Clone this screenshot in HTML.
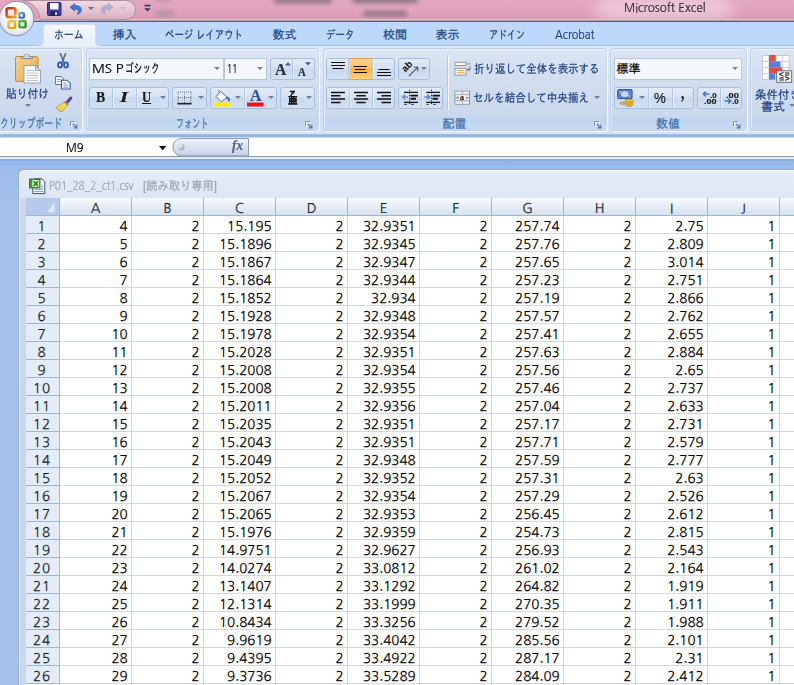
<!DOCTYPE html>
<html lang="ja"><head><meta charset="utf-8"><title>Microsoft Excel</title>
<style>
*{box-sizing:border-box;margin:0;padding:0}
html,body{width:794px;height:685px;overflow:hidden;background:#bfdbff}
body{position:relative;font-family:"Liberation Sans","IPAGothic","Noto Sans CJK JP",sans-serif;font-size:12px;color:#15428b}
.abs{position:absolute}
svg{display:block;position:absolute;overflow:visible}
/* title bar */
#title{position:absolute;left:0;top:0;width:794px;height:22px;background:linear-gradient(#e3a6bf 0,#e2a4bc 10px,#d89ab2 19px);overflow:hidden}
#title .sm{position:absolute;background:#6a5f70;opacity:.8;filter:blur(2.5px);border-radius:3px}
#title .glow{position:absolute;left:596px;top:-4px;width:136px;height:24px;border-radius:12px;background:#f0cfde;filter:blur(7px);opacity:.8}
#title .line{position:absolute;left:0;top:19px;width:794px;height:3px;background:linear-gradient(#e3bccd 0,#e8c6d4 1.2px,#565a80 2px,#565a80 3px)}
#apptitle{position:absolute;left:623px;top:0px;font-size:12px;color:#3c3c46;letter-spacing:0.35px;white-space:nowrap;line-height:15px}
/* tabs */
#tabs{position:absolute;left:0;top:22px;width:794px;height:23px;background:#bed8fb;z-index:2}
.tab{position:absolute;top:6px;font-size:12px;line-height:14px;white-space:nowrap;color:#15428b}

/* ribbon */
#ribbon{position:absolute;left:0;top:45px;width:794px;height:90px;background:linear-gradient(#e2ebf7 0,#d9e4f3 30px,#d1dff2 70px,#d6e4f7 100%);border-top:1px solid #a6c3ec}
.grp{position:absolute;top:2px;height:83px;border:1px solid #bccfe8;border-right-color:#c9d8ec;border-radius:4px;background:linear-gradient(#dce6f4 0,#d4e0f0 20px,#cad8ec 67px,#c1d5ef 69px,#c5d9f2 100%);box-shadow:1px 1px 0 rgba(255,255,255,.8),inset 1px 1px 0 rgba(255,255,255,.45)}
.glabel{position:absolute;left:0;right:0;bottom:1px;height:14px;line-height:14px;text-align:center;font-size:12px;color:#3e6aaa;white-space:nowrap}
.btn{position:absolute;border:1px solid #a7bfde;border-radius:3px;background:linear-gradient(#e1ebf7 0,#d6e2f3 45%,#c9d9ee 50%,#d3e1f3 100%)}
.box{position:absolute;border:1px solid #b3c9e6;background:#f4f8fd;color:#000}
.t{position:absolute;white-space:nowrap;line-height:14px;transform-origin:0 0}
#labels,#icons{position:absolute;left:0;top:0;width:794px;height:685px;overflow:hidden;z-index:3}
#labels{z-index:4}
#labels .t{-webkit-text-stroke:0.2px currentColor}
.dd{position:absolute;width:0;height:0;border-left:3px solid transparent;border-right:3px solid transparent;border-top:3px solid #6b7fa3}
.dv{position:absolute;top:0;bottom:0;width:1px;background:#b5c9e6;box-shadow:1px 0 0 rgba(255,255,255,.5)}
.sel{position:absolute;top:-1px;bottom:-1px;background:linear-gradient(#ffd291 0,#ffbe5d 45%,#ffac35 50%,#ffd487 100%);border:1px solid #e8a64a}
.vsep{position:absolute;width:1px;background:#b9c9e0;box-shadow:1px 0 0 rgba(255,255,255,.8)}
/* formula bar */
#fbar{position:absolute;left:0;top:134px;width:794px;height:26px;background:linear-gradient(#b9cfee 0,#93b4e4 .8px,#93b4e4 3.3px,#fff 3.7px,#fff 22px,#8b98a6 22px,#8b98a6 23px,#e3eefb 23px,#dfebfa 25.5px,#8aabdc 25.5px)}
/* workspace */
#work{position:absolute;left:0;top:160px;width:794px;height:525px;background:linear-gradient(#8aabdc 0,#93b5e8 1.5px,#9ebdec 10px,#a4c1ed 40px,#a5c2ed 100%)}
#win{position:absolute;left:18px;top:9px;width:900px;height:600px;border:1px solid #96add0;border-radius:6px 0 0 0;background:linear-gradient(#e6edf8 0,#dde6f3 27px,#cdd8e9 29px,#cbd6e8 100%);box-shadow:inset 1px 1px 0 rgba(255,255,255,.6)}
#wtitle{position:absolute;left:30px;top:8px;font-size:12px;line-height:14px;color:#8d96a3;white-space:nowrap}
#grid{font-family:'NanumGothic','Liberation Sans',sans-serif;position:absolute;left:7px;top:28px;width:880px;height:500px;background:#fff;font-size:13.4px;color:#000;text-rendering:geometricPrecision;-webkit-text-stroke:0.18px #000}
.corner{position:absolute;left:0;top:0;width:34px;height:18px;background:#b3caea;border-right:1px solid #9eb6ce;border-bottom:1px solid #9eb6ce}
.ch{position:absolute;top:0;width:72px;height:18px;line-height:22px;text-align:center;background:linear-gradient(#f7fafd 0,#e6edf6 50%,#d7e2f0 100%);border-right:1px solid #9eb6ce;border-bottom:1px solid #9eb6ce;color:#27303c}
.rh{position:absolute;left:0;width:34px;height:18px;line-height:21px;text-align:center;padding-right:1px;letter-spacing:.8px;background:#e4ecf7;border-right:1px solid #9eb6ce;border-bottom:1px solid #9eb6ce;color:#27303c}
.row{position:absolute;left:34px;height:18px;white-space:nowrap;font-size:0}
.row span{display:inline-block;width:72px;height:18px;line-height:21px;font-size:13.4px;letter-spacing:0;text-align:right;padding-right:3.3px;border-right:1px solid #d0d7e5;border-bottom:1px solid #d0d7e5;vertical-align:top}
.row i{font-style:normal;position:relative;top:-0.6px;-webkit-text-stroke:0.45px #000}
</style></head><body>

<div id="title">
<div class="sm" style="left:274px;top:-3px;width:58px;height:6px"></div>
<div class="sm" style="left:352px;top:-3px;width:66px;height:6px"></div>
<div class="sm" style="left:363px;top:11px;width:44px;height:5px;opacity:.75"></div>
<div class="sm" style="left:155px;top:11px;width:19px;height:5px;opacity:.55;background:#7d8094"></div>
<div class="sm" style="left:155px;top:-3px;width:16px;height:4px;opacity:.4"></div>
<div class="glow"></div>
<div class="line"></div>
</div>

<div id="tabs">
<svg style="left:38px;top:1px" width="64" height="24" viewBox="38 23 64 24">
<defs><linearGradient id="tg" x1="0" y1="0" x2="0" y2="1"><stop offset="0" stop-color="#f7faff"/><stop offset=".5" stop-color="#edf3fc"/><stop offset="1" stop-color="#e4edf9"/></linearGradient></defs>
<path d="M39 47 V46 Q43.3 45.6 43.5 41.5 V27.5 Q43.5 24.2 47 24.2 H92 Q95.5 24.2 95.5 27.5 V41.5 Q95.7 45.6 100 46 V47Z" fill="url(#tg)" stroke="#cfdef3" stroke-width="1"/>
<rect x="39" y="46" width="62" height="1.2" fill="#e4edf9"/>
</svg>
</div>

<div id="ribbon">
<div class="grp" style="left:-3px;width:85px"></div>
<div class="grp" style="left:86px;width:233px"></div>
<div class="grp" style="left:323px;width:284px"></div>
<div class="grp" style="left:610px;width:137px"></div>
<div class="grp" style="left:750px;width:100px"></div>
</div>

<div id="fbar">
</div>

<div id="work">
<div id="win">
<div id="grid">
<div class="corner"><svg width="34" height="17"><polygon points="28.7,4 28.7,14.3 21.3,14.3" fill="#dde8f6"/></svg></div>
<div class="ch" style="left:34px">A</div>
<div class="ch" style="left:106px">B</div>
<div class="ch" style="left:178px">C</div>
<div class="ch" style="left:250px">D</div>
<div class="ch" style="left:322px">E</div>
<div class="ch" style="left:394px">F</div>
<div class="ch" style="left:466px">G</div>
<div class="ch" style="left:538px">H</div>
<div class="ch" style="left:610px">I</div>
<div class="ch" style="left:682px">J</div>
<div class="ch" style="left:754px">K</div>
<div class="rh" style="top:18px">1</div>
<div class="row" style="top:18px"><span>4</span><span>2</span><span>15<i>.</i>195</span><span>2</span><span>32<i>.</i>9351</span><span>2</span><span>257<i>.</i>74</span><span>2</span><span>2<i>.</i>75</span><span>1</span><span></span></div>
<div class="rh" style="top:36px">2</div>
<div class="row" style="top:36px"><span>5</span><span>2</span><span>15<i>.</i>1896</span><span>2</span><span>32<i>.</i>9345</span><span>2</span><span>257<i>.</i>76</span><span>2</span><span>2<i>.</i>809</span><span>1</span><span></span></div>
<div class="rh" style="top:54px">3</div>
<div class="row" style="top:54px"><span>6</span><span>2</span><span>15<i>.</i>1867</span><span>2</span><span>32<i>.</i>9347</span><span>2</span><span>257<i>.</i>65</span><span>2</span><span>3<i>.</i>014</span><span>1</span><span></span></div>
<div class="rh" style="top:72px">4</div>
<div class="row" style="top:72px"><span>7</span><span>2</span><span>15<i>.</i>1864</span><span>2</span><span>32<i>.</i>9344</span><span>2</span><span>257<i>.</i>23</span><span>2</span><span>2<i>.</i>751</span><span>1</span><span></span></div>
<div class="rh" style="top:90px">5</div>
<div class="row" style="top:90px"><span>8</span><span>2</span><span>15<i>.</i>1852</span><span>2</span><span>32<i>.</i>934</span><span>2</span><span>257<i>.</i>19</span><span>2</span><span>2<i>.</i>866</span><span>1</span><span></span></div>
<div class="rh" style="top:108px">6</div>
<div class="row" style="top:108px"><span>9</span><span>2</span><span>15<i>.</i>1928</span><span>2</span><span>32<i>.</i>9348</span><span>2</span><span>257<i>.</i>57</span><span>2</span><span>2<i>.</i>762</span><span>1</span><span></span></div>
<div class="rh" style="top:126px">7</div>
<div class="row" style="top:126px"><span>10</span><span>2</span><span>15<i>.</i>1978</span><span>2</span><span>32<i>.</i>9354</span><span>2</span><span>257<i>.</i>41</span><span>2</span><span>2<i>.</i>655</span><span>1</span><span></span></div>
<div class="rh" style="top:144px">8</div>
<div class="row" style="top:144px"><span>11</span><span>2</span><span>15<i>.</i>2028</span><span>2</span><span>32<i>.</i>9351</span><span>2</span><span>257<i>.</i>63</span><span>2</span><span>2<i>.</i>884</span><span>1</span><span></span></div>
<div class="rh" style="top:162px">9</div>
<div class="row" style="top:162px"><span>12</span><span>2</span><span>15<i>.</i>2008</span><span>2</span><span>32<i>.</i>9354</span><span>2</span><span>257<i>.</i>56</span><span>2</span><span>2<i>.</i>65</span><span>1</span><span></span></div>
<div class="rh" style="top:180px">10</div>
<div class="row" style="top:180px"><span>13</span><span>2</span><span>15<i>.</i>2008</span><span>2</span><span>32<i>.</i>9355</span><span>2</span><span>257<i>.</i>46</span><span>2</span><span>2<i>.</i>737</span><span>1</span><span></span></div>
<div class="rh" style="top:198px">11</div>
<div class="row" style="top:198px"><span>14</span><span>2</span><span>15<i>.</i>2011</span><span>2</span><span>32<i>.</i>9356</span><span>2</span><span>257<i>.</i>04</span><span>2</span><span>2<i>.</i>633</span><span>1</span><span></span></div>
<div class="rh" style="top:216px">12</div>
<div class="row" style="top:216px"><span>15</span><span>2</span><span>15<i>.</i>2035</span><span>2</span><span>32<i>.</i>9351</span><span>2</span><span>257<i>.</i>17</span><span>2</span><span>2<i>.</i>731</span><span>1</span><span></span></div>
<div class="rh" style="top:234px">13</div>
<div class="row" style="top:234px"><span>16</span><span>2</span><span>15<i>.</i>2043</span><span>2</span><span>32<i>.</i>9351</span><span>2</span><span>257<i>.</i>71</span><span>2</span><span>2<i>.</i>579</span><span>1</span><span></span></div>
<div class="rh" style="top:252px">14</div>
<div class="row" style="top:252px"><span>17</span><span>2</span><span>15<i>.</i>2049</span><span>2</span><span>32<i>.</i>9348</span><span>2</span><span>257<i>.</i>59</span><span>2</span><span>2<i>.</i>777</span><span>1</span><span></span></div>
<div class="rh" style="top:270px">15</div>
<div class="row" style="top:270px"><span>18</span><span>2</span><span>15<i>.</i>2052</span><span>2</span><span>32<i>.</i>9352</span><span>2</span><span>257<i>.</i>31</span><span>2</span><span>2<i>.</i>63</span><span>1</span><span></span></div>
<div class="rh" style="top:288px">16</div>
<div class="row" style="top:288px"><span>19</span><span>2</span><span>15<i>.</i>2067</span><span>2</span><span>32<i>.</i>9354</span><span>2</span><span>257<i>.</i>29</span><span>2</span><span>2<i>.</i>526</span><span>1</span><span></span></div>
<div class="rh" style="top:306px">17</div>
<div class="row" style="top:306px"><span>20</span><span>2</span><span>15<i>.</i>2065</span><span>2</span><span>32<i>.</i>9353</span><span>2</span><span>256<i>.</i>45</span><span>2</span><span>2<i>.</i>612</span><span>1</span><span></span></div>
<div class="rh" style="top:324px">18</div>
<div class="row" style="top:324px"><span>21</span><span>2</span><span>15<i>.</i>1976</span><span>2</span><span>32<i>.</i>9359</span><span>2</span><span>254<i>.</i>73</span><span>2</span><span>2<i>.</i>815</span><span>1</span><span></span></div>
<div class="rh" style="top:342px">19</div>
<div class="row" style="top:342px"><span>22</span><span>2</span><span>14<i>.</i>9751</span><span>2</span><span>32<i>.</i>9627</span><span>2</span><span>256<i>.</i>93</span><span>2</span><span>2<i>.</i>543</span><span>1</span><span></span></div>
<div class="rh" style="top:360px">20</div>
<div class="row" style="top:360px"><span>23</span><span>2</span><span>14<i>.</i>0274</span><span>2</span><span>33<i>.</i>0812</span><span>2</span><span>261<i>.</i>02</span><span>2</span><span>2<i>.</i>164</span><span>1</span><span></span></div>
<div class="rh" style="top:378px">21</div>
<div class="row" style="top:378px"><span>24</span><span>2</span><span>13<i>.</i>1407</span><span>2</span><span>33<i>.</i>1292</span><span>2</span><span>264<i>.</i>82</span><span>2</span><span>1<i>.</i>919</span><span>1</span><span></span></div>
<div class="rh" style="top:396px">22</div>
<div class="row" style="top:396px"><span>25</span><span>2</span><span>12<i>.</i>1314</span><span>2</span><span>33<i>.</i>1999</span><span>2</span><span>270<i>.</i>35</span><span>2</span><span>1<i>.</i>911</span><span>1</span><span></span></div>
<div class="rh" style="top:414px">23</div>
<div class="row" style="top:414px"><span>26</span><span>2</span><span>10<i>.</i>8434</span><span>2</span><span>33<i>.</i>3256</span><span>2</span><span>279<i>.</i>52</span><span>2</span><span>1<i>.</i>988</span><span>1</span><span></span></div>
<div class="rh" style="top:432px">24</div>
<div class="row" style="top:432px"><span>27</span><span>2</span><span>9<i>.</i>9619</span><span>2</span><span>33<i>.</i>4042</span><span>2</span><span>285<i>.</i>56</span><span>2</span><span>2<i>.</i>101</span><span>1</span><span></span></div>
<div class="rh" style="top:450px">25</div>
<div class="row" style="top:450px"><span>28</span><span>2</span><span>9<i>.</i>4395</span><span>2</span><span>33<i>.</i>4922</span><span>2</span><span>287<i>.</i>17</span><span>2</span><span>2<i>.</i>31</span><span>1</span><span></span></div>
<div class="rh" style="top:468px">26</div>
<div class="row" style="top:468px"><span>29</span><span>2</span><span>9<i>.</i>3736</span><span>2</span><span>33<i>.</i>5289</span><span>2</span><span>284<i>.</i>09</span><span>2</span><span>2<i>.</i>412</span><span>1</span><span></span></div>
</div>
</div>
</div>

<div id="icons">
<!-- font group controls -->
<div class="box" style="left:89px;top:58px;width:135px;height:22px"></div>
<div class="box" style="left:224px;top:58px;width:43px;height:22px"></div>
<div class="dd" style="left:214px;top:67px"></div>
<div class="dd" style="left:257px;top:67px"></div>
<div class="btn" style="left:270px;top:58px;width:45px;height:22px"><i class="dv" style="left:21px"></i></div>
<div class="btn" style="left:89px;top:87px;width:80px;height:22px"><i class="dv" style="left:22px"></i><i class="dv" style="left:46px"></i></div>
<div class="dd" style="left:160px;top:96px"></div>
<div class="btn" style="left:172px;top:87px;width:35px;height:22px"></div>
<div class="dd" style="left:198px;top:96px"></div>
<div class="btn" style="left:210px;top:87px;width:67px;height:22px"><i class="dv" style="left:33px"></i></div>
<div class="dd" style="left:235px;top:96px"></div>
<div class="dd" style="left:268px;top:96px"></div>
<div class="btn" style="left:280px;top:87px;width:35px;height:22px"></div>
<div class="dd" style="left:306px;top:96px"></div>
<!-- alignment group -->
<div class="btn" style="left:326px;top:58px;width:69px;height:22px"><i class="sel" style="left:22px;width:24px"></i><i class="dv" style="left:21px"></i><i class="dv" style="left:45px"></i></div>
<div class="btn" style="left:398px;top:58px;width:32px;height:22px"></div>
<div class="dd" style="left:421px;top:67px"></div>
<div class="btn" style="left:326px;top:87px;width:69px;height:22px"><i class="dv" style="left:22px"></i><i class="dv" style="left:45px"></i></div>
<div class="btn" style="left:398px;top:87px;width:45px;height:22px"><i class="dv" style="left:22px"></i></div>
<div class="vsep" style="left:447px;top:55px;height:55px"></div>
<div class="dd" style="left:594px;top:96px"></div>
<!-- number group -->
<div class="box" style="left:614px;top:58px;width:128px;height:22px"></div>
<div class="dd" style="left:732px;top:67px"></div>
<div class="btn" style="left:614px;top:87px;width:80px;height:22px"><i class="dv" style="left:33px"></i><i class="dv" style="left:57px"></i></div>
<div class="dd" style="left:639px;top:96px"></div>
<div class="btn" style="left:697px;top:87px;width:45px;height:22px"><i class="dv" style="left:22px"></i></div>
<div class="dd" style="left:789px;top:104px"></div>
<div class="dd" style="left:25px;top:104px"></div>
<!-- QAT pill -->
<svg style="left:0;top:0" width="160" height="22" viewBox="0 0 160 22">
<defs><linearGradient id="qg" x1="0" y1="0" x2="0" y2="1"><stop offset="0" stop-color="#f0dfe6"/><stop offset=".5" stop-color="#e6cbd5"/><stop offset="1" stop-color="#d9b1c0"/></linearGradient></defs>
<path d="M22 0.5 H126 A9.5 9.5 0 0 1 126 19.5 H40 A20 20 0 0 0 22 0.5Z" fill="url(#qg)" stroke="#b08a9c" stroke-width="1" opacity=".9"/>
</svg>
<!-- office button -->
<svg style="left:-2px;top:0" width="38" height="38" viewBox="-2 0 38 38">
<defs>
<radialGradient id="ob" cx=".5" cy=".45" r=".55"><stop offset="0" stop-color="#ffffff"/><stop offset=".7" stop-color="#f3f4f8"/><stop offset=".9" stop-color="#dfe3ee"/><stop offset="1" stop-color="#c2c8da"/></radialGradient>
<linearGradient id="o1" x1="0" y1="0" x2="1" y2="1"><stop offset="0" stop-color="#c92a12"/><stop offset="1" stop-color="#f4a21c"/></linearGradient>
<linearGradient id="o2" x1="0" y1="0" x2="1" y2="1"><stop offset="0" stop-color="#5fa2dd"/><stop offset="1" stop-color="#2a62aa"/></linearGradient>
<linearGradient id="o3" x1="0" y1="0" x2="1" y2="1"><stop offset="0" stop-color="#f6c432"/><stop offset="1" stop-color="#ec9a18"/></linearGradient>
<linearGradient id="o4" x1="0" y1="0" x2="1" y2="1"><stop offset="0" stop-color="#6cc04a"/><stop offset="1" stop-color="#2f8a2c"/></linearGradient>
</defs>
<circle cx="16.5" cy="18.5" r="17.3" fill="url(#ob)" stroke="#8f90a8" stroke-width="1"/>
<path d="M0.5 14.5 A16.5 16.5 0 0 1 32.5 14.5 A30 30 0 0 0 0.5 14.5Z" fill="#fff" opacity=".6"/>
<rect x="6.6" y="8.3" width="8.8" height="8.8" rx="1.8" fill="#f6e9e0" stroke="url(#o1)" stroke-width="2.6"/>
<rect x="19.2" y="13.1" width="4.8" height="4.6" rx="1" fill="#e3eefa" stroke="url(#o2)" stroke-width="2"/>
<rect x="8.5" y="21.3" width="6.6" height="6.8" rx="1.5" fill="#fbf3d8" stroke="url(#o3)" stroke-width="2.4"/>
<rect x="19.3" y="21" width="6.3" height="6.4" rx="1.2" fill="#d8efcf" stroke="url(#o4)" stroke-width="2.4"/>
<rect x="14.5" y="15.5" width="5" height="7" fill="#f7f7fa"/>
<circle cx="15.5" cy="17.3" r="1.1" fill="#d8761a"/><circle cx="19.3" cy="17.3" r="1.1" fill="#2f6cb5"/>
<circle cx="15.5" cy="21.3" r="1.1" fill="#e8ae28"/><circle cx="19.3" cy="21.3" r="1.1" fill="#3c9a36"/>
</svg>
<!-- save -->
<svg style="left:47px;top:2px" width="15" height="14" viewBox="0 0 15 14">
<rect x=".5" y=".5" width="13.5" height="13" rx="1" fill="#3c3ca8" stroke="#28287a"/>
<rect x="3" y="1" width="8.5" height="6.5" fill="#f4f6ff"/>
<rect x="3.5" y="9.5" width="7.5" height="4" fill="#23235c"/>
<rect x="8" y="10.3" width="2" height="2.6" fill="#e8ecff"/>
</svg>
<!-- undo -->
<svg style="left:69px;top:3px" width="14" height="12" viewBox="0 0 14 12">
<path d="M1 4.2 L5.6 0.4 V2.6 C10.5 2.2 13.2 4.6 12.2 8 C11.6 9.8 10 11 8 11.4 C9.8 9.6 10.2 6.2 5.6 6 V8.2Z" fill="#3f78d6" stroke="#2b58b0" stroke-width=".6"/>
</svg>
<div class="dd" style="left:88px;top:7px;border-top-color:#5d6c98"></div>
<!-- redo -->
<svg style="left:100px;top:3px" width="14" height="12" viewBox="0 0 14 12">
<path d="M13 4.2 L8.4 0.4 V2.6 C3.5 2.2 0.8 4.6 1.8 8 C2.4 9.8 4 11 6 11.4 C4.2 9.6 3.8 6.2 8.4 6 V8.2Z" fill="#b3aed0" stroke="#a59fc4" stroke-width=".6"/>
</svg>
<div class="dd" style="left:120px;top:7px;border-top-color:#c9b9c8"></div>
<!-- customize -->
<svg style="left:144px;top:4px" width="8" height="9" viewBox="0 0 8 9">
<rect x=".5" y=".8" width="6" height="1.6" fill="#2d3668"/>
<path d="M.2 4.2 H6.8 L3.5 7.6Z" fill="#2d3668"/>
</svg>
<!-- paste -->
<svg style="left:14px;top:52px" width="28" height="32" viewBox="0 0 28 32">
<defs><linearGradient id="pg" x1="0" y1="0" x2="1" y2="1"><stop offset="0" stop-color="#f7d48e"/><stop offset="1" stop-color="#e3a84e"/></linearGradient></defs>
<rect x="1.5" y="4.5" width="22.5" height="25" rx="1.5" fill="url(#pg)" stroke="#c08d43"/>
<path d="M7 6.5 V4.5 H10 C10 1.5 15.5 1.5 15.5 4.5 H18.5 V6.5Z" fill="#cfd3da" stroke="#7d8594" stroke-width=".9"/>
<circle cx="12.7" cy="3.6" r="1" fill="#f6f7f9"/>
<path d="M10 13.5 H21.5 L26.5 18.5 V31 H10Z" fill="#fdfeff" stroke="#8d98ad" stroke-width=".9"/>
<path d="M21.5 13.5 V18.5 H26.5Z" fill="#d5dbe6" stroke="#8d98ad" stroke-width=".8"/>
<path d="M12.5 18.5 H20 M12.5 21 H24 M12.5 23.5 H24 M12.5 26 H24 M12.5 28.5 H24" stroke="#b9c3d3" stroke-width="1"/>
</svg>
<!-- scissors -->
<svg style="left:57px;top:53px" width="12" height="16" viewBox="0 0 12 16">
<path d="M3.4 0.6 L7 9.6 M8.6 0.6 L5 9.6" stroke="#5f6f8c" stroke-width="1.6" stroke-linecap="round"/>
<ellipse cx="3" cy="12" rx="2" ry="2.6" fill="none" stroke="#2f55b4" stroke-width="1.8"/>
<ellipse cx="9" cy="12" rx="2" ry="2.6" fill="none" stroke="#2f55b4" stroke-width="1.8"/>
</svg>
<!-- copy -->
<svg style="left:55px;top:75px" width="17" height="15" viewBox="0 0 17 15">
<path d="M.6 1.5 H6 L8.5 4 V9.5 H.6Z" fill="#fbfdff" stroke="#4f6fb5" stroke-width="1"/>
<path d="M2 4.5 H6.5 M2 6.5 H6.5" stroke="#7c93c8" stroke-width=".9"/>
<path d="M6.5 5.2 H12 L15.2 8.2 V14 H6.5Z" fill="#fbfdff" stroke="#3c5aa8" stroke-width="1.1"/>
<path d="M8.3 8.2 H11.5 M8.3 10.2 H13.5 M8.3 12.2 H13.5" stroke="#6f88c4" stroke-width=".9"/>
</svg>
<!-- format painter -->
<svg style="left:55px;top:97px" width="18" height="16" viewBox="0 0 18 16">
<path d="M15.8 1 L12 5.4" stroke="#5a3fa0" stroke-width="3" stroke-linecap="round"/>
<path d="M10.2 4.2 L13.4 7.2 L7.2 14.6 C4.8 14.6 2.6 12.6 1 10.6Z" fill="#f4d860" stroke="#b59a2c" stroke-width=".9"/>
<path d="M9.8 5.2 L12.6 7.8" stroke="#8a8aa8" stroke-width="1.6"/>
<path d="M3.2 11 L6 13.4 M5 9.6 L8 12.2" stroke="#d6b93e" stroke-width=".8"/>
</svg>
<!-- dialog launchers -->
<svg style="left:70px;top:121px" width="8" height="8" viewBox="0 0 8 8"><path d="M.5 5 V.5 H5" fill="none" stroke="#7e93b4"/><path d="M3 3 L6.7 6.7 M6.9 3.6 V6.9 H3.6" fill="none" stroke="#5d7498" stroke-width="1.1"/><path d="M1.5 6 V1.5 H6" fill="none" stroke="#fff" opacity=".8"/></svg>
<svg style="left:305px;top:121px" width="8" height="8" viewBox="0 0 8 8"><path d="M.5 5 V.5 H5" fill="none" stroke="#7e93b4"/><path d="M3 3 L6.7 6.7 M6.9 3.6 V6.9 H3.6" fill="none" stroke="#5d7498" stroke-width="1.1"/><path d="M1.5 6 V1.5 H6" fill="none" stroke="#fff" opacity=".8"/></svg>
<svg style="left:594px;top:121px" width="8" height="8" viewBox="0 0 8 8"><path d="M.5 5 V.5 H5" fill="none" stroke="#7e93b4"/><path d="M3 3 L6.7 6.7 M6.9 3.6 V6.9 H3.6" fill="none" stroke="#5d7498" stroke-width="1.1"/><path d="M1.5 6 V1.5 H6" fill="none" stroke="#fff" opacity=".8"/></svg>
<svg style="left:733px;top:121px" width="8" height="8" viewBox="0 0 8 8"><path d="M.5 5 V.5 H5" fill="none" stroke="#7e93b4"/><path d="M3 3 L6.7 6.7 M6.9 3.6 V6.9 H3.6" fill="none" stroke="#5d7498" stroke-width="1.1"/><path d="M1.5 6 V1.5 H6" fill="none" stroke="#fff" opacity=".8"/></svg>
<!-- grow/shrink triangles -->
<svg style="left:285px;top:62px" width="6" height="4" viewBox="0 0 6 4"><path d="M0 3.5 L3 .3 L6 3.5Z" fill="#3d5a9a"/></svg>
<svg style="left:305px;top:62px" width="6" height="4" viewBox="0 0 6 4"><path d="M0 .3 L3 3.5 L6 .3Z" fill="#3d5a9a"/></svg>
<!-- border icon -->
<svg style="left:177px;top:91px" width="15" height="14" viewBox="0 0 15 14">
<path d="M1 1 H14 M1 6.5 H14 M1 1 V12 M7.5 1 V12 M14 1 V12" stroke="#6d7a8c" stroke-width="1" stroke-dasharray="1 1"/>
<path d="M.5 12.7 H14.5" stroke="#1d1d2c" stroke-width="1.6"/>
</svg>
<!-- fill bucket -->
<svg style="left:213px;top:89px" width="19" height="18" viewBox="0 0 19 18">
<path d="M5.5 1 L7 6" stroke="#6a7890" stroke-width="1" fill="none"/>
<path d="M7.5 2.5 L14 8 L8.5 13 L3 7.5Z" fill="#f7f9fc" stroke="#5b6b86" stroke-width="1"/>
<path d="M14 8 C16.5 8.5 17 10.5 16 12.5 C15.2 11 15 9.5 13 9Z" fill="#3d6cc8" stroke="#2c4f9e" stroke-width=".6"/>
<rect x="1" y="13.5" width="16.5" height="4" fill="#ffee00"/>
</svg>
<!-- font color bar -->
<svg style="left:247px;top:102px" width="17" height="5" viewBox="0 0 17 5"><rect x="0" y=".5" width="16.5" height="4" fill="#f5101c"/></svg>
<!-- vertical align icons -->
<svg style="left:331px;top:62px" width="15" height="8" viewBox="0 0 15 8"><path d="M0 .5 H14 M0 3.5 H14 M1.5 6.5 H12.5" stroke="#111" stroke-width="1.2"/></svg>
<svg style="left:353px;top:65px" width="15" height="9" viewBox="0 0 15 9"><path d="M0.5 1.5 H14 M2 4.5 H12.5 M0.5 7.5 H14" stroke="#111" stroke-width="1.2"/></svg>
<svg style="left:377px;top:68px" width="15" height="9" viewBox="0 0 15 9"><path d="M1.5 1.5 H12.5 M0 4.5 H14 M0 7.5 H14" stroke="#111" stroke-width="1.2"/></svg>
<!-- orientation -->
<svg style="left:400px;top:59px" width="22" height="20" viewBox="400 59 22 20">
<path d="M409 76 L417.3 67.6 M413.6 67.2 L417.8 67.1 L417.7 71.3" fill="none" stroke="#4d5868" stroke-width="1.1"/>
<text x="0" y="0" transform="translate(405.2 72.6) rotate(-45)" font-family="Liberation Sans, sans-serif" font-weight="bold" font-size="9.5" fill="#111">ab</text>
</svg>
<!-- horizontal align -->
<svg style="left:331px;top:91px" width="15" height="13" viewBox="0 0 15 13"><path d="M0 1.5 H14 M0 4.8 H9.5 M0 8.1 H14 M0 11.4 H9.5" stroke="#111" stroke-width="1.5"/></svg>
<svg style="left:354px;top:91px" width="15" height="13" viewBox="0 0 15 13"><path d="M0 1.5 H14 M2.3 4.8 H11.7 M0 8.1 H14 M2.3 11.4 H11.7" stroke="#111" stroke-width="1.5"/></svg>
<svg style="left:377px;top:91px" width="15" height="13" viewBox="0 0 15 13"><path d="M0 1.5 H14 M4.5 4.8 H14 M0 8.1 H14 M4.5 11.4 H14" stroke="#111" stroke-width="1.5"/></svg>
<!-- indent icons -->
<svg style="left:402px;top:89px" width="17" height="16" viewBox="402 89 17 16">
<path d="M409.6 89.8 V104.6" stroke="#222" stroke-width="1" stroke-dasharray="1.2 1.4"/>
<path d="M404 92.4 H418 M404 102.4 H418" stroke="#111" stroke-width="1.2"/>
<path d="M410.5 95.6 H418 M410.5 98.8 H416" stroke="#111" stroke-width="1.9"/>
<path d="M404 104.4 H407 M411 104.4 H414" stroke="#333" stroke-width=".9"/>
<path d="M408 97 H402.8 M405.2 94.6 L402.6 97 L405.2 99.4" fill="none" stroke="#6f90d6" stroke-width="1.5"/>
</svg>
<svg style="left:424px;top:89px" width="17" height="16" viewBox="424 89 17 16">
<path d="M431.5 89.8 V104.6" stroke="#222" stroke-width="1" stroke-dasharray="1.2 1.4"/>
<path d="M426.3 92.4 H440 M426.3 102.4 H440" stroke="#111" stroke-width="1.2"/>
<path d="M432.5 95.6 H440 M432.5 98.8 H438" stroke="#111" stroke-width="1.9"/>
<path d="M426.3 104.4 H429 M433 104.4 H436" stroke="#333" stroke-width=".9"/>
<path d="M424.4 97 H429.6 M427.2 94.6 L429.8 97 L427.2 99.4" fill="none" stroke="#5a84d6" stroke-width="1.5"/>
</svg>
<!-- wrap text icon -->
<svg style="left:454px;top:61px" width="18" height="16" viewBox="454 61 18 16">
<rect x="455" y="62.3" width="11" height="3.2" fill="#fdf6e6" stroke="#8e8f96" stroke-width=".9"/>
<path d="M466 63.9 H470.5" stroke="#8e8f96" stroke-width=".9"/>
<rect x="455" y="68.3" width="11" height="6.8" fill="#fdf6e6" stroke="#8e8f96" stroke-width=".9"/>
<path d="M456.8 70.6 H464.2 M456.8 72.8 H464.2" stroke="#e9a64a" stroke-width="1"/>
<path d="M470 66.2 V69.6 L467.4 69.6 M468.8 68.2 L467.3 69.7 L468.8 71.2" fill="none" stroke="#56688c" stroke-width=".9"/>
</svg>
<!-- merge icon -->
<svg style="left:454px;top:90px" width="17" height="16" viewBox="454 90 17 16">
<rect x="455" y="91.2" width="14.5" height="13" fill="#fff" stroke="#8c9098" stroke-width="1"/>
<rect x="455.5" y="91.7" width="13.5" height="2.8" fill="#e9ebee"/><rect x="455.5" y="101" width="13.5" height="2.8" fill="#e9ebee"/>
<path d="M455 94.8 H469.5 M455 100.7 H469.5 M462.2 91.2 V94.8 M462.2 100.7 V104.2" stroke="#9a9ea6" stroke-width=".9"/>
<path d="M455.8 97.8 H458.6 M457.4 96.6 L458.7 97.8 L457.4 99 M468.8 97.8 H466 M467.2 96.6 L465.9 97.8 L467.2 99" fill="none" stroke="#4d6aa6" stroke-width=".9"/>
<text x="459.7" y="100.2" font-family="Liberation Serif, serif" font-weight="bold" font-size="8.5" fill="#111">a</text>
</svg>
<!-- currency -->
<svg style="left:617px;top:89px" width="18" height="18" viewBox="0 0 18 18">
<rect x=".6" y=".6" width="14.5" height="9" rx="1" fill="#5c86cf" stroke="#2f4f9a" stroke-width="1"/>
<ellipse cx="7.8" cy="5" rx="3.4" ry="2.6" fill="#c9d8f2" stroke="#e8eefb" stroke-width=".6"/>
<path d="M2.5 3 H4 M11.8 7 H13.3" stroke="#dfe8fa" stroke-width="1"/>
<g fill="#f1c23a" stroke="#a97a16" stroke-width=".7"><ellipse cx="12" cy="15.6" rx="4" ry="1.6"/><ellipse cx="12" cy="13.6" rx="4" ry="1.6"/><ellipse cx="12" cy="11.6" rx="4" ry="1.6"/></g>
<g fill="#f1c23a" stroke="#a97a16" stroke-width=".7"><ellipse cx="5.5" cy="14.2" rx="2.6" ry="1.1"/></g>
</svg>
<!-- decimal arrows -->
<svg style="left:702px;top:91px" width="8" height="6" viewBox="0 0 8 6"><path d="M7.5 3 H1.5 M3.8 .6 L1.2 3 L3.8 5.4" fill="none" stroke="#3f73cf" stroke-width="1.4"/></svg>
<svg style="left:724px;top:98px" width="8" height="6" viewBox="0 0 8 6"><path d="M.5 3 H6.5 M4.2 .6 L6.8 3 L4.2 5.4" fill="none" stroke="#3f73cf" stroke-width="1.4"/></svg>
<!-- conditional formatting -->
<svg style="left:762px;top:54px" width="32" height="30" viewBox="762 54 32 30">
<rect x="762.5" y="55.5" width="26.5" height="24" fill="#fdfdfe" stroke="#c3cad8"/>
<path d="M762.5 61.5 H789 M762.5 67.5 H789 M762.5 73.5 H789 M769 55.5 V79.5 M775.7 55.5 V79.5 M782.3 55.5 V79.5" stroke="#c9cfdc" stroke-width="1"/>
<rect x="769" y="55" width="6.7" height="6.5" fill="#ea4a3a"/>
<rect x="769" y="61.5" width="11.5" height="6" fill="#4f80de"/>
<rect x="769" y="67.5" width="13" height="6" fill="#ea4a3a"/>
<rect x="769" y="73.5" width="6" height="6" fill="#4f80de"/>
<rect x="776.7" y="70.8" width="15" height="11.5" fill="#f6f6f7" stroke="#5d6066" stroke-width=".9"/>
<path d="M783.6 72.3 L779.3 74.3 L783.6 76.2 M779.3 78 H783.8 M779.3 80 H783.8 M785 73 H789.3 M785 75 H789.3 M785 76.6 L789.4 78.5 L785 80.4" fill="none" stroke="#111" stroke-width="1"/>
</svg>
<!-- formula bar -->
<svg style="left:159px;top:146px" width="8" height="5" viewBox="0 0 8 5"><path d="M0 0 H7.4 L3.7 4.2Z" fill="#111"/></svg>
<svg style="left:171px;top:137px" width="80" height="20" viewBox="0 0 80 20">
<defs><linearGradient id="fg" x1="0" y1="0" x2="0" y2="1"><stop offset="0" stop-color="#eef3fa"/><stop offset=".5" stop-color="#d9e3f1"/><stop offset="1" stop-color="#c3d1e6"/></linearGradient>
<radialGradient id="fb" cx=".35" cy=".35" r=".7"><stop offset="0" stop-color="#f4f6f9"/><stop offset="1" stop-color="#9aa6b8"/></radialGradient></defs>
<path d="M77.5 1.5 H10.5 A8.7 8.7 0 0 0 10.5 18.9 H77.5Z" fill="url(#fg)" stroke="#8c9db8" stroke-width="1"/>
<circle cx="10.2" cy="9.8" r="3.4" fill="url(#fb)"/>
</svg>
<!-- window icon -->
<svg style="left:29px;top:178px" width="17" height="17" viewBox="0 0 17 17">
<path d="M5.5 .8 H13 L15.8 3.6 V15.6 H3.8 V8" fill="#f2f5fc" stroke="#3b4b9a" stroke-width="1"/>
<path d="M6 11.5 H13 V7 M5.5 13.5 H14" fill="none" stroke="#8d9bd0" stroke-width="1"/>
<rect x=".5" y="1" width="10.5" height="9" fill="#3f9a32" stroke="#226a1c" stroke-width=".8"/>
<rect x="3.2" y="2" width="7" height="7" fill="#d9efc4"/>
<path d="M4.5 3.2 L9 8 M9 3.2 L4.5 8" stroke="#2c7a22" stroke-width="1.6"/>
</svg>

</div>

<div id="labels">
<div class="t" id="t_home" style="left:54px;top:28px;font-size:12px;color:#1a3f80;transform:scaleX(0.8194);">ホーム</div>
<div class="t" id="t_ins" style="left:112.5px;top:28px;font-size:12px;color:#1a3f80;transform:scaleX(1.0000);">挿入</div>
<div class="t" id="t_page" style="left:165px;top:28px;font-size:12px;color:#1a3f80;transform:scaleX(0.7852);">ページ レイアウト</div>
<div class="t" id="t_form" style="left:272.5px;top:28px;font-size:12px;color:#1a3f80;transform:scaleX(1.0000);">数式</div>
<div class="t" id="t_data" style="left:325.5px;top:28px;font-size:12px;color:#1a3f80;transform:scaleX(0.7917);">データ</div>
<div class="t" id="t_rev" style="left:383px;top:28px;font-size:12px;color:#1a3f80;transform:scaleX(1.0000);">校閲</div>
<div class="t" id="t_view" style="left:435.5px;top:28px;font-size:12px;color:#1a3f80;transform:scaleX(1.0000);">表示</div>
<div class="t" id="t_add" style="left:489px;top:28px;font-size:12px;color:#1a3f80;transform:scaleX(0.7500);">アドイン</div>
<div class="t" id="t_acro" style="left:554.5px;top:28px;font-size:12px;color:#1a3f80;transform:scaleX(0.8908);font-family:'NanumGothic','Liberation Sans',sans-serif;">Acrobat</div>
<div class="t" id="l_paste" style="left:5.5px;top:87px;font-size:12px;color:#1a3f80;transform:scaleX(0.8958);">貼り付け</div>
<div class="t" id="g_clip" style="left:0px;top:116.5px;font-size:13px;color:#3e6aaa;transform:scaleX(0.6813);">クリップボード</div>
<div class="t" id="g_font" style="left:176px;top:116.5px;font-size:13px;color:#3e6aaa;transform:scaleX(0.6250);">フォント</div>
<div class="t" id="g_align" style="left:442.5px;top:117px;font-size:12px;color:#3e6aaa;transform:scaleX(1.0000);">配置</div>
<div class="t" id="g_num" style="left:656px;top:117px;font-size:12px;color:#3e6aaa;transform:scaleX(1.0000);">数値</div>
<div class="t" id="f_name" style="left:92.3px;top:62px;font-size:12px;color:#000;transform:scaleX(1.1071);font-family:'NanumGothic','Liberation Sans',sans-serif;">MS P</div>
<div class="t" id="f_name2" style="left:124.5px;top:61.5px;font-size:13px;color:#000;transform:scaleX(0.6692);">ゴシック</div>
<div class="t" id="f_size" style="left:227px;top:62px;font-size:12px;color:#000;transform:scaleX(0.7218);font-family:'NanumGothic','Liberation Sans',sans-serif;">11</div>
<div class="t" id="a_wrap" style="left:473.5px;top:62px;font-size:12px;color:#1a3f80;transform:scaleX(0.8715);">折り返して全体を表示する</div>
<div class="t" id="a_merge" style="left:473px;top:91px;font-size:12px;color:#1a3f80;transform:scaleX(0.8788);">セルを結合して中央揃え</div>
<div class="t" id="n_std" style="left:616.5px;top:62px;font-size:12px;color:#000;transform:scaleX(1.0000);">標準</div>
<div class="t" id="s_cond1" style="left:754.5px;top:88px;font-size:12px;color:#1a3f80;transform:scaleX(0.9583);">条件付き</div>
<div class="t" id="s_cond2" style="left:761px;top:100px;font-size:12px;color:#1a3f80;transform:scaleX(1.0000);">書式</div>
<div class="t" id="x_app" style="left:623.5px;top:0.5px;font-size:12.5px;color:#2e2e38;transform:scaleX(0.9238);font-family:'NanumGothic','Liberation Sans',sans-serif;">Microsoft Excel</div>
<div class="t" id="x_name" style="left:65.5px;top:141px;font-size:13px;color:#000;transform:scaleX(0.8543);font-family:'NanumGothic','Liberation Sans',sans-serif;">M9</div>
<div class="t" id="w_title" style="left:49px;top:179px;font-size:12px;color:#9aa3b0;transform:scaleX(0.8392);font-family:'NanumGothic','Liberation Sans',sans-serif;">P01_28_2_ct1.csv</div>
<div class="t" id="w_ro" style="left:142.5px;top:179px;font-size:12px;color:#9aa3b0;transform:scaleX(0.9406);">[読み取り専用]</div>
<div class="t" id="i_b" style="left:96px;top:90.5px;font-size:14px;color:#1a1a1a;transform:scaleX(0.9846);font-family:'Liberation Serif','IPAGothic',serif;font-weight:bold;">B</div>
<div class="t" id="i_i" style="left:119.5px;top:90.5px;font-size:14px;color:#1a1a1a;transform:scaleX(1.4670);font-family:'Liberation Serif','IPAGothic',serif;font-weight:bold;font-style:italic;">I</div>
<div class="t" id="i_u" style="left:142.2px;top:90.5px;font-size:14px;color:#1a1a1a;transform:scaleX(0.8988);font-family:'Liberation Serif','IPAGothic',serif;font-weight:bold;text-decoration:underline;">U</div>
<div class="t" id="i_ga" style="left:275px;top:62.5px;font-size:16px;color:#2a2f3a;transform:scaleX(0.9773);font-family:'Liberation Serif','IPAGothic',serif;font-weight:bold;">A</div>
<div class="t" id="i_sa" style="left:298px;top:64.5px;font-size:12px;color:#2a2f3a;transform:scaleX(0.8995);font-family:'Liberation Serif','IPAGothic',serif;font-weight:bold;">A</div>
<div class="t" id="i_fc" style="left:250px;top:88.5px;font-size:16px;color:#2e4f9e;transform:scaleX(0.9946);font-family:'Liberation Serif','IPAGothic',serif;font-weight:bold;">A</div>
<div class="t" id="i_pct" style="left:653.5px;top:91px;font-size:14px;color:#1a1a1a;transform:scaleX(0.9476);">%</div>
<div class="t" id="i_comma" style="left:680.6px;top:86px;font-size:18px;color:#1a1a1a;transform:scaleX(0.7556);font-family:'Liberation Serif','IPAGothic',serif;font-weight:bold;">,</div>
<div class="t" id="i_fx" style="left:232px;top:139px;font-size:14px;color:#5a6474;transform:scaleX(0.9424);font-family:'Liberation Serif','IPAGothic',serif;font-weight:bold;font-style:italic;">fx</div>
<div class="t" id="i_ph1" style="left:289px;top:87px;font-size:7px;color:#111;transform:scaleX(0.9286);font-weight:bold;">ア</div>
<div class="t" id="i_ph2" style="left:287.6px;top:94px;font-size:10px;color:#111;transform:scaleX(0.9600);font-weight:bold;">亜</div>
<div class="t" id="i_d1a" style="left:710px;top:88.5px;font-size:8px;color:#1a1a1a;transform:scaleX(0.9742);font-weight:bold;">.0</div>
<div class="t" id="i_d1b" style="left:704px;top:95px;font-size:8px;color:#1a1a1a;transform:scaleX(1.1236);font-weight:bold;">.00</div>
<div class="t" id="i_d2a" style="left:725.5px;top:88.5px;font-size:8px;color:#1a1a1a;transform:scaleX(1.1685);font-weight:bold;">.00</div>
<div class="t" id="i_d2b" style="left:732px;top:95px;font-size:8px;color:#1a1a1a;transform:scaleX(0.9742);font-weight:bold;">.0</div>
</div>
</body></html>
